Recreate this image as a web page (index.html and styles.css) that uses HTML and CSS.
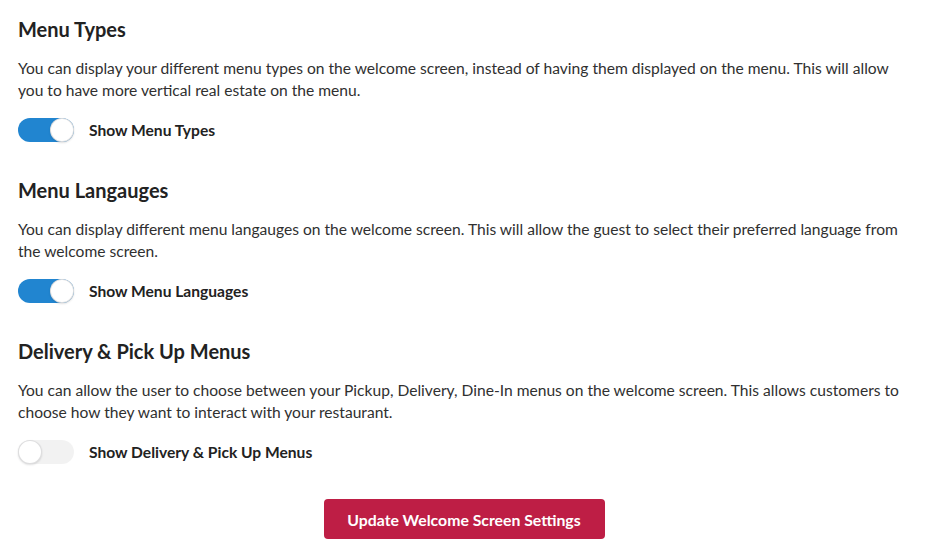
FILE: index.html
```html
<!DOCTYPE html>
<html>
<head>
<meta charset="utf-8">
<link rel="stylesheet" href="styles.css">
</head>
<body>
<div class="page">
  <section class="block">
    <h3 class="title">Menu Types</h3>
    <p class="desc">You can display your different menu types on the welcome screen, instead of having them displayed on the menu. This will allow you to have more vertical real estate on the menu.</p>
    <label class="toggle on"><span class="track"><span class="knob"></span></span><span class="lbl">Show Menu Types</span></label>
  </section>
  <section class="block">
    <h3 class="title">Menu Langauges</h3>
    <p class="desc">You can display different menu langauges on the welcome screen. This will allow the guest to select their preferred language from the welcome screen.</p>
    <label class="toggle on"><span class="track"><span class="knob"></span></span><span class="lbl">Show Menu Languages</span></label>
  </section>
  <section class="block">
    <h3 class="title">Delivery &amp; Pick Up Menus</h3>
    <p class="desc">You can allow the user to choose between your Pickup, Delivery, Dine-In menus on the welcome screen. This allows customers to choose how they want to interact with your restaurant.</p>
    <label class="toggle"><span class="track"><span class="knob"></span></span><span class="lbl">Show Delivery &amp; Pick Up Menus</span></label>
  </section>
  <div class="actions">
    <button class="btn">Update Welcome Screen Settings</button>
  </div>
</div>
</body>
</html>
```
FILE: styles.css
```css
html, body {
  margin: 0;
  padding: 0;
  background: #fff;
}
body {
  font-family: Lato, "Open Sans", sans-serif;
  color: #212121;
}
.page {
  padding: 16px 18px 0 18px;
  width: 892px;
}
.block {
  display: flex;
  flex-direction: column;
  align-items: flex-start;
  margin-bottom: 35px;
}
.title {
  margin: 0;
  font-size: 20px;
  line-height: 26px;
  font-weight: 700;
  color: #222;
}
.desc {
  margin: 15px 0 17px;
  font-size: 15.6px;
  line-height: 22px;
  color: #303030;
}
.toggle {
  display: flex;
  align-items: center;
  gap: 15px;
}
.track {
  width: 56px;
  height: 24px;
  border-radius: 12px;
  background: rgba(0,0,0,0.05);
  position: relative;
  display: block;
}
.toggle.on .track {
  background: #2185d0;
}
.knob {
  position: absolute;
  top: 0;
  left: 0;
  width: 24px;
  height: 24px;
  border-radius: 50%;
  background: #fff;
  box-shadow: 0 1px 2px 0 rgba(34,36,38,0.15), 0 0 0 1px rgba(34,36,38,0.15) inset;
}
.toggle.on .knob {
  left: 32px;
}
.lbl {
  font-size: 15.6px;
  font-weight: 700;
  color: #222;
}
.actions {
  display: flex;
  justify-content: center;
  margin-top: 7px;
}
.btn {
  width: 281px;
  height: 40px;
  border: none;
  border-radius: 4px;
  background: #be1e45;
  color: #fff;
  font-family: Lato, sans-serif;
  font-size: 15.8px;
  font-weight: 700;
}
```
